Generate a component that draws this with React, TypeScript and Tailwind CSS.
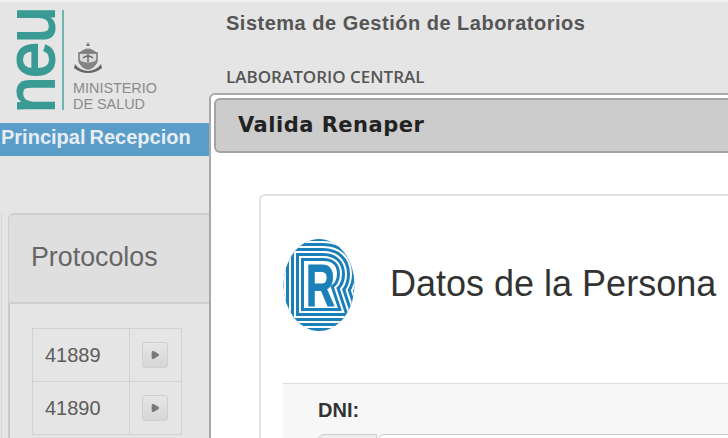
import React from 'react';
import { Play } from 'lucide-react';

const STRIPES = [50, 44, 40, 34, 30, 24, 20, 14, 10, 4];
const R_PATH = 'M23 67V24H40Q52 24 52 35Q52 43 45 46L52 67Z';

function RenaperLogo() {
  return (
    <svg width="72" height="92" viewBox="0 0 72 92">
      <defs>
        <clipPath id="oval">
          <ellipse cx="36" cy="46" rx="35.5" ry="46" />
        </clipPath>
      </defs>
      <g clipPath="url(#oval)" fill="none" strokeLinejoin="miter" strokeMiterlimit={8}>
        {STRIPES.map((w, i) => (
          <path key={w} d={R_PATH} stroke={i % 2 === 0 ? '#1b80b9' : '#ffffff'} strokeWidth={w} />
        ))}
      </g>
      <path d={R_PATH} fill="#fff" />
      <text x="23" y="67" fontFamily="'Liberation Sans', sans-serif" fontWeight="700" fontSize="59" fill="#1b80b9" stroke="#1b80b9" strokeWidth="0.8" textLength="29" lengthAdjust="spacingAndGlyphs">R</text>
    </svg>
  );
}

function Crest() {
  return (
    <svg width="30" height="32" viewBox="0 0 30 32">
      <path d="M15 0l2 4h-4z" fill="#777" />
      <path d="M6 11q9-9 18 0z" fill="#858585" />
      <path d="M6 11h18v8q-2 6-9 8q-7-2-9-8z" fill="#dadada" stroke="#777" strokeWidth="1.5" />
      <path d="M15 12v8M10 16q5-4 10 0" stroke="#666" strokeWidth="1.4" fill="none" />
      <path d="M6 18q9 5 18 0v3q-4 5-9 6q-5-1-9-6z" fill="#858585" />
      <path d="M2 22q4 6 13 7q9-1 13-7l1 4q-6 5-14 5t-14-5z" fill="#666" />
    </svg>
  );
}

function Row({ id }: { id: string }) {
  return (
    <div className="flex h-[53px] border-b border-[#d2d2d2]">
      <div className="flex w-[97px] items-center border-r border-[#d2d2d2] pl-3 text-[20px] text-[#5c5c5c]">{id}</div>
      <div className="flex flex-1 items-center pl-[12px]">
        <button className="flex h-[26px] w-[26px] items-center justify-center rounded-[3px] border border-[#cfcfcf] bg-linear-to-b from-[#e6e6e6] to-[#d6d6d6]">
          <Play size={10} className="fill-[#777] text-[#777]" />
        </button>
      </div>
    </div>
  );
}

export default function App() {
  return (
    <div className="relative h-[438px] w-[728px] overflow-hidden border-t-2 border-[#f2f2f2] bg-[#e5e5e5] font-['Liberation_Sans',sans-serif]">
      <div className="flex h-full">
        <aside className="w-[209px] shrink-0">
          <div className="relative h-[121px]">
            <span className="absolute left-[2px] top-[3px] rotate-180 scale-y-[0.95] text-[68px] leading-[56px] tracking-[-1px] text-[#3a9a94] [writing-mode:vertical-rl] [-webkit-text-stroke:2px_#3a9a94]">
              neu
            </span>
            <div className="absolute left-[62px] top-[8px] h-[100px] w-[2px] bg-[#6fb5b0]" />
            <div className="absolute left-[73px] top-[40px]">
              <Crest />
            </div>
            <div className="absolute left-[73px] top-[78px] text-[14.4px] leading-[16px] text-[#8b8b8b]">
              MINISTERIO
              <br />
              DE SALUD
            </div>
          </div>
          <nav className="flex h-[33px] items-center gap-[4px] bg-[#5b9dc9] pb-[5px] pl-[1px] text-[20px] font-bold text-[#e6eef4]">
            <span>Principal</span>
            <span>Recepcion</span>
          </nav>
          <div className="ml-[1px] mt-[57px] border-l border-[#d8d8d8] pl-[6px]">
            <div className="flex h-[91px] items-center rounded-tl-md border-b-2 border-l border-t-2 border-[#cfcfcf] bg-[#dfdfdf] pb-[2px] pl-[22px] text-[26.8px] text-[#666]">
              Protocolos
            </div>
            <div className="h-[200px] border-l-2 border-[#c8c8c8] pl-[22px] pt-[24px]">
              <div className="w-[150px] border-l border-r border-t border-[#d2d2d2]">
                <Row id="41889" />
                <Row id="41890" />
              </div>
            </div>
          </div>
        </aside>
        <main className="pl-[17px] pt-[10px]">
          <h1 className="text-[20px] font-bold leading-[22px] tracking-[0.5px] text-[#555]">Sistema de Gestión de Laboratorios</h1>
          <h2 className="mt-[32px] font-['Open_Sans',sans-serif] text-[17px] font-semibold leading-[22px] text-[#555]">LABORATORIO CENTRAL</h2>
        </main>
      </div>

      {/* modal */}
      <div className="absolute left-[209px] top-[91px] h-[400px] w-[600px] rounded-tl-md border-2 border-[#a9a9a9] bg-white pl-[3px] pt-[3px]">
        <div className="flex h-[55px] items-center rounded-md border-2 border-[#a3a3a3] bg-[#cccccc] pl-[22px] pt-[1px] font-['DejaVu_Sans',sans-serif] text-[21px] font-bold tracking-[0.5px] text-[#222]">
          Valida Renaper
        </div>
        <div className="ml-[45px] mt-[41px] h-[300px] rounded-tl-md border-l-2 border-t-2 border-[#e2e2e2]">
          <div className="flex h-[187px] items-start">
            <div className="ml-[22px] mt-[43px]">
              <RenaperLogo />
            </div>
            <h3 className="ml-[35px] mt-[67px] text-[36px] leading-[42px] text-[#333]">Datos de la Persona</h3>
          </div>
          <div className="ml-[22px] h-[100px] border-t border-[#dddddd] bg-[#f7f7f7] pl-[35px] pt-[15px]">
            <div className="text-[20px] font-bold leading-[22px] text-[#333]">DNI:</div>
            <div className="mt-[13px] flex gap-[1px]">
              <div className="h-[20px] w-[59px] shrink-0 rounded-tl-md border border-[#cccccc] bg-[#eeeeee]" />
              <div className="h-[20px] w-[500px] shrink-0 rounded-tl-md border border-[#cccccc] bg-white" />
            </div>
          </div>
        </div>
      </div>
    </div>
  );
}
